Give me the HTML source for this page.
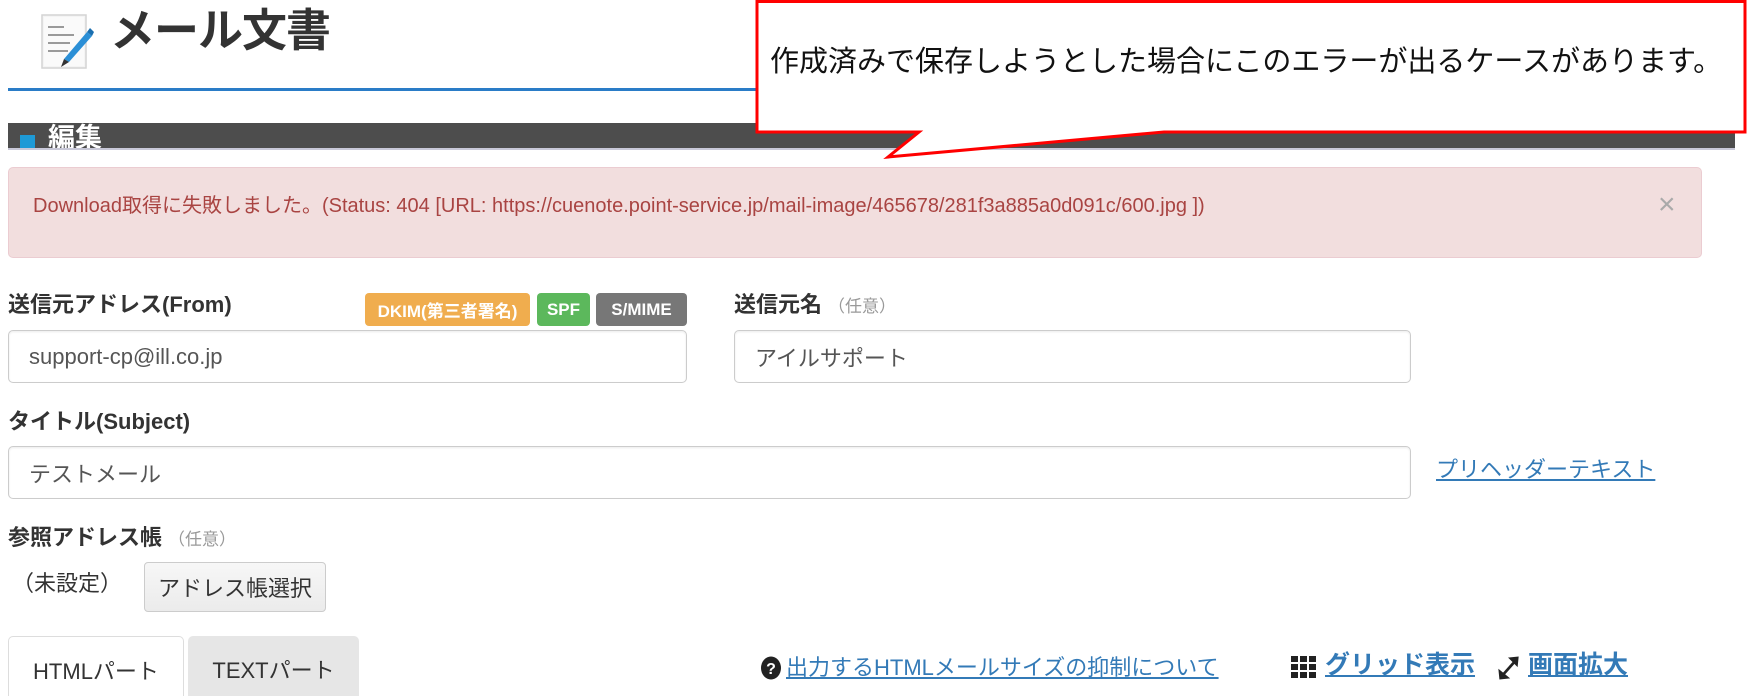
<!DOCTYPE html>
<html><head><meta charset="utf-8">
<style>
*{margin:0;padding:0;box-sizing:border-box}
body{width:1748px;height:694px;overflow:hidden;background:#fff;position:relative;font-family:"Liberation Sans","Noto Sans CJK JP",sans-serif;color:#333}
.a{position:absolute;white-space:nowrap}
.lbl{font-weight:bold;font-size:22px;color:#333;line-height:26px}
.opt{font-weight:normal;color:#999;font-size:17px;margin-left:6px}
.inp{position:absolute;border:1px solid #ccc;border-radius:5px;background:#fff;box-shadow:inset 0 1px 2px rgba(0,0,0,.08);font-size:22px;color:#555;padding-left:20px;display:flex;align-items:center}
.badge{position:absolute;top:293px;height:33px;border-radius:4px;color:#fff;font-weight:bold;font-size:17px;display:flex;align-items:center;justify-content:center}
.lnk{color:#337ab7;text-decoration:underline}
</style></head><body>

<svg class="a" style="left:40px;top:12px" width="54" height="58" viewBox="0 0 54 58">
<rect x="2" y="3" width="44" height="53" fill="#f4f4f4" stroke="#d4d4d4" stroke-width="1.5"/>
<rect x="4" y="5" width="40" height="49" fill="#fafafa"/>
<g stroke="#9a9a9a" stroke-width="2"><line x1="8" y1="15" x2="24" y2="15"/><line x1="8" y1="23" x2="34" y2="23"/><line x1="8" y1="31" x2="30" y2="31"/><line x1="8" y1="39" x2="28" y2="39"/></g>
<path d="M24 47 L47 20 L52 24 L29 50 Z" fill="#2b8fd6"/>
<path d="M24 47 L29 50 L21 55 Z" fill="#333"/>
<path d="M47 20 L50 16 L54 20 L52 24 Z" fill="#1a6fb0"/>
</svg>
<div class="a" style="left:110px;top:2px;font-size:45px;font-weight:bold;color:#333;line-height:58px;letter-spacing:-1px">メール文書</div>
<div class="a" style="left:8px;top:88px;width:1400px;height:3px;background:#2a7cc7"></div>

<div class="a" style="left:8px;top:123px;width:1727px;height:27px;background:#4d4d4d;border-bottom:2px solid #c8c8d8;overflow:hidden">
<div class="a" style="left:12px;top:12px;width:15px;height:13px;background:#1e9ad6"></div>
<div class="a" style="left:40px;top:-3px;font-size:27px;font-weight:bold;color:#fff;line-height:36px">編集</div>
</div>

<div class="a" style="left:8px;top:167px;width:1694px;height:91px;background:#f2dede;border:1px solid #ebccd1;border-radius:5px"></div>
<div class="a" style="left:33px;top:194px;font-size:20px;color:#a94442;line-height:24px">Download取得に失敗しました。(Status: 404 [URL: https://cuenote.point-service.jp/mail-image/465678/281f3a885a0d091c/600.jpg ])</div>
<div class="a" style="left:1658px;top:190px;font-size:30px;color:#aaa;line-height:30px">×</div>

<div class="a lbl" style="left:8px;top:292px">送信元アドレス(From)</div>
<div class="badge" style="left:365px;width:165px;background:#f0ad4e">DKIM(第三者署名)</div>
<div class="badge" style="left:537px;width:53px;background:#5cb85c">SPF</div>
<div class="badge" style="left:596px;width:91px;background:#777">S/MIME</div>
<div class="a lbl" style="left:734px;top:292px">送信元名<span class="opt">（任意）</span></div>
<div class="inp" style="left:8px;top:330px;width:679px;height:53px">support-cp@ill.co.jp</div>
<div class="inp" style="left:734px;top:330px;width:677px;height:53px">アイルサポート</div>

<div class="a lbl" style="left:8px;top:409px">タイトル(Subject)</div>
<div class="inp" style="left:8px;top:446px;width:1403px;height:53px">テストメール</div>
<div class="a lnk" style="left:1436px;top:456px;font-size:22px;line-height:28px">プリヘッダーテキスト</div>

<div class="a lbl" style="left:8px;top:525px">参照アドレス帳<span class="opt">（任意）</span></div>
<div class="a" style="left:12px;top:571px;font-size:22px;line-height:26px;color:#333">（未設定）</div>
<div class="a" style="left:144px;top:562px;width:182px;height:50px;border:1px solid #ccc;border-radius:4px;background:linear-gradient(#f7f7f7,#ebebeb);font-size:22px;color:#333;display:flex;align-items:center;justify-content:center">アドレス帳選択</div>

<div class="a" style="left:8px;top:636px;width:176px;height:60px;border:1px solid #ddd;border-bottom:none;border-radius:5px 5px 0 0;background:#fff;font-size:22px;color:#333;text-align:center;padding-top:17px">HTMLパート</div>
<div class="a" style="left:188px;top:636px;width:171px;height:60px;border-radius:5px 5px 0 0;background:#e6e6e6;font-size:22px;color:#333;text-align:center;padding-top:17px">TEXTパート</div>

<svg class="a" style="left:760px;top:656px" width="22" height="24" viewBox="0 0 22 24"><ellipse cx="11" cy="12" rx="10" ry="11.5" fill="#222"/><text x="11" y="18" font-size="16" font-weight="bold" fill="#fff" text-anchor="middle" font-family="Liberation Sans">?</text></svg>
<div class="a lnk" style="left:786px;top:654px;font-size:22px;line-height:28px">出力するHTMLメールサイズの抑制について</div>

<svg class="a" style="left:1291px;top:656px" width="26" height="24" viewBox="0 0 26 24"><g fill="#222"><rect x="0" y="0" width="7" height="6"/><rect x="9" y="0" width="7" height="6"/><rect x="18" y="0" width="7" height="6"/><rect x="0" y="8" width="7" height="6"/><rect x="9" y="8" width="7" height="6"/><rect x="18" y="8" width="7" height="6"/><rect x="0" y="16" width="7" height="6"/><rect x="9" y="16" width="7" height="6"/><rect x="18" y="16" width="7" height="6"/></g></svg>
<div class="a lnk" style="left:1325px;top:650px;font-size:25px;font-weight:bold;line-height:30px">グリッド表示</div>
<svg class="a" style="left:1498px;top:656px" width="22" height="24" viewBox="0 0 24 26"><g fill="#222" stroke="#222"><line x1="4" y1="22" x2="20" y2="4" stroke-width="3"/><path d="M12 2 L22 1 L21 11 Z"/><path d="M1 15 L2 25 L12 24 Z"/></g></svg>
<div class="a lnk" style="left:1528px;top:650px;font-size:25px;font-weight:bold;line-height:30px">画面拡大</div>

<svg class="a" style="left:0;top:0" width="1748" height="170">
<polygon points="757,1.5 1745,1.5 1745,132 1164,132 888,157 919,132 757,132" fill="#fff" stroke="#f00" stroke-width="3"/>
</svg>
<div class="a" style="left:770px;top:44px;font-size:29px;color:#111;line-height:36px">作成済みで保存しようとした場合にこのエラーが出るケースがあります。</div>

</body></html>
